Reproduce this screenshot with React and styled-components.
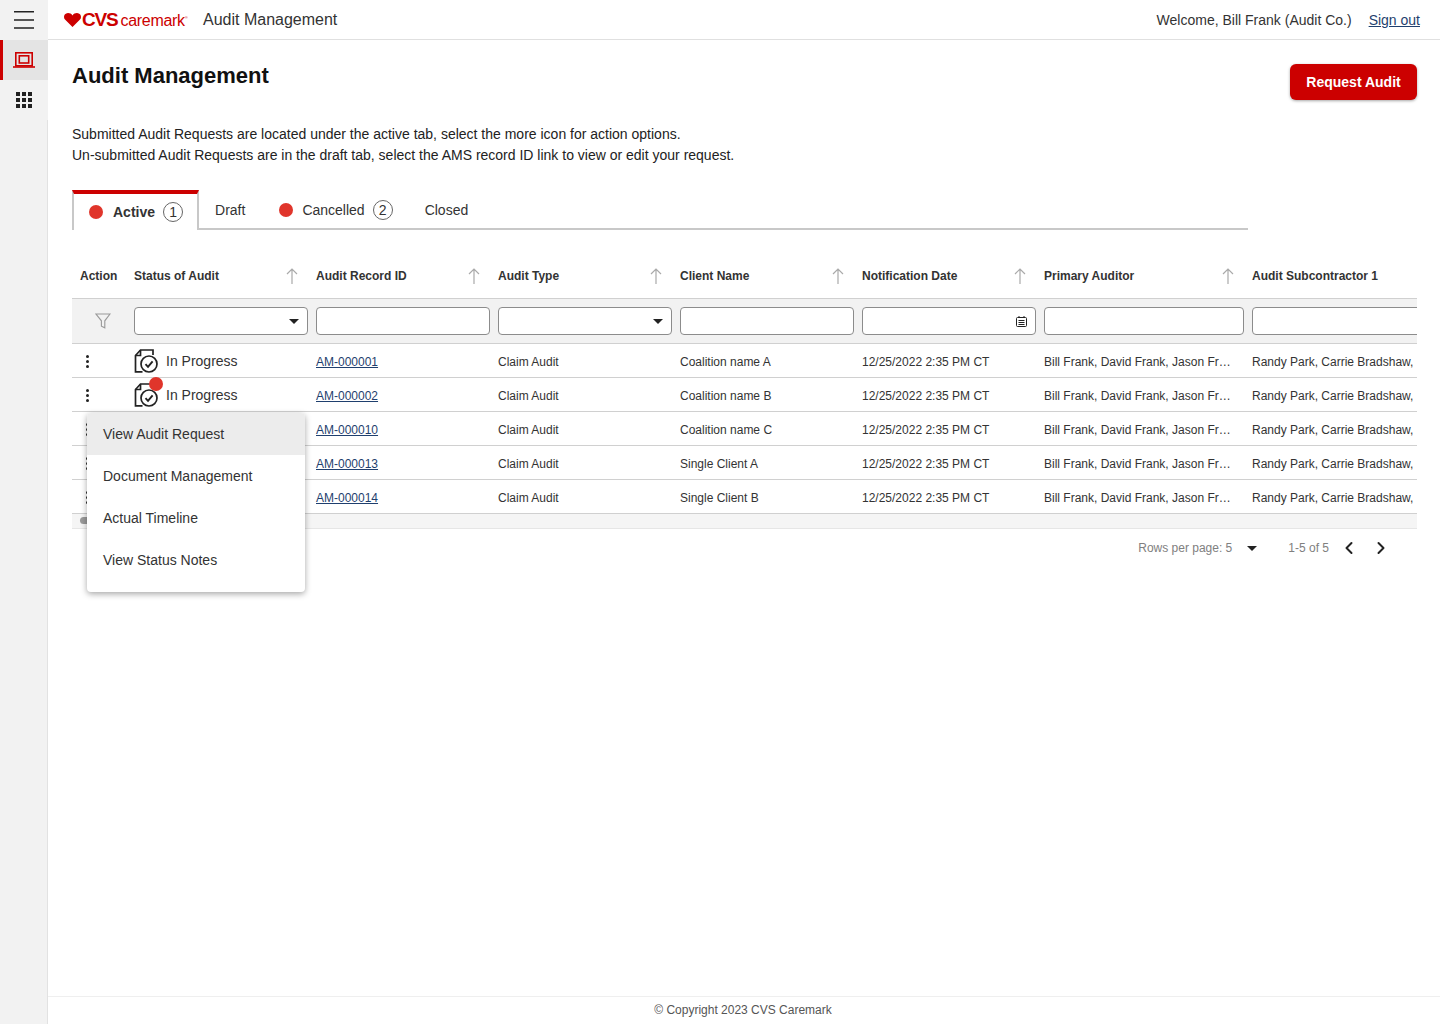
import React from "react";
import styled, { createGlobalStyle } from "styled-components";
import { ChevronLeft, ChevronRight } from "lucide-react";

const GlobalStyle = createGlobalStyle`
  html, body {
    margin: 0;
    padding: 0;
    background: #fff;
    font-family: "Liberation Sans", Arial, sans-serif;
    color: #333;
  }
  * { box-sizing: border-box; }
`;

const rows = [
  { id: "AM-000001", client: "Coalition name A" },
  { id: "AM-000002", client: "Coalition name B", flag: true },
  { id: "AM-000010", client: "Coalition name C", hideStatus: true },
  { id: "AM-000013", client: "Single Client A", hideStatus: true },
  { id: "AM-000014", client: "Single Client B", hideStatus: true },
];

const headers = [
  "Status of Audit",
  "Audit Record ID",
  "Audit Type",
  "Client Name",
  "Notification Date",
  "Primary Auditor",
];

const menuItems = ["View Audit Request", "Document Management", "Actual Timeline", "View Status Notes"];

const Page = styled.div`
  display: flex;
  min-height: 1024px;
`;

const Sidebar = styled.nav`
  width: 48px;
  flex: none;
  display: flex;
  flex-direction: column;
  background: #f2f2f2;
`;

const SideItem = styled.div`
  height: 40px;
  display: flex;
  align-items: center;
  justify-content: center;
  background: ${(p) => (p.$active ? "#e4e4e4" : "transparent")};
  border-left: ${(p) => (p.$active ? "3px solid #cc0000" : "none")};
  padding-right: ${(p) => (p.$active ? "3px" : "0")};
`;

const SideRest = styled.div`
  flex: 1;
  border-right: 1px solid #e2e2e2;
`;

const Main = styled.div`
  flex: 1;
  min-width: 0;
  display: flex;
  flex-direction: column;
`;

const Header = styled.header`
  height: 40px;
  display: flex;
  align-items: center;
  padding: 0 20px 0 16px;
  border-bottom: 1px solid #e0e0e0;
`;

const Logo = styled.div`
  display: flex;
  align-items: center;
  color: #cc0000;
  width: 139px;
`;

const LogoCvs = styled.span`
  font-size: 19px;
  font-weight: 700;
  letter-spacing: -1.2px;
  margin-left: 1px;
`;

const LogoCare = styled.span`
  font-size: 16px;
  letter-spacing: -0.3px;
  margin-left: 3px;
  margin-top: 2px;
`;

const LogoTm = styled.sup`
  font-size: 4px;
  margin-top: -5px;
`;

const AppName = styled.span`
  font-size: 16px;
  color: #333;
`;

const Welcome = styled.span`
  margin-left: auto;
  font-size: 14px;
  color: #333;
`;

const SignOut = styled.a`
  margin-left: 17px;
  font-size: 14px;
  color: #1f3f6e;
  text-decoration: underline;
`;

const Content = styled.main`
  flex: 1;
  padding: 24px 23px 0 24px;
`;

const TitleRow = styled.div`
  display: flex;
  justify-content: space-between;
  align-items: flex-start;
`;

const Title = styled.h1`
  margin: 0;
  font-size: 22px;
  line-height: 24px;
  font-weight: 700;
  color: #111;
`;

const RequestButton = styled.button`
  width: 127px;
  height: 36px;
  border: none;
  border-radius: 6px;
  background: #cc0000;
  color: #fff;
  font-family: inherit;
  font-size: 14px;
  font-weight: 700;
  box-shadow: 0 1px 3px rgba(0, 0, 0, 0.35);
`;

const Intro = styled.p`
  margin: 24px 0 0;
  font-size: 14px;
  line-height: 21px;
  color: #222;
`;

const Tabs = styled.div`
  margin-top: 24px;
  width: 1176px;
  height: 40px;
  display: flex;
  border-bottom: 2px solid #c8c8c8;
`;

const Tab = styled.div`
  display: flex;
  align-items: center;
  height: 36px;
  margin-top: 2px;
  padding: ${(p) => p.$pad || "0"};
  font-size: 14px;
  color: #333;
`;

const ActiveTab = styled(Tab)`
  height: 40px;
  margin-top: 0;
  font-weight: 700;
  background: #fff;
  border-top: 4px solid #cc0000;
  border-left: 2px solid #c8c8c8;
  border-right: 2px solid #c8c8c8;
`;

const Dot = styled.span`
  display: inline-block;
  width: 14px;
  height: 14px;
  border-radius: 50%;
  background: #e0352b;
  flex: none;
`;

const Count = styled.span`
  display: inline-flex;
  align-items: center;
  justify-content: center;
  width: 20px;
  height: 20px;
  border: 1.5px solid #666;
  border-radius: 50%;
  font-size: 14px;
  font-weight: 400;
  color: #333;
`;

const TabDot = styled(Dot)`
  margin-right: ${(p) => p.$gap}px;
`;

const TabCount = styled(Count)`
  margin-left: ${(p) => p.$gap}px;
`;

const TableWrap = styled.div`
  position: relative;
  margin-top: 23px;
`;

const TableScroll = styled.div`
  overflow: hidden;
`;

const Row = styled.div`
  display: grid;
  grid-template-columns: 62px repeat(5, 182px) 208px 200px;
  align-items: center;
`;

const HeadRow = styled(Row)`
  height: 46px;
  border-bottom: 1px solid #d0d0d0;
`;

const HeadCell = styled.div`
  display: flex;
  align-items: center;
  justify-content: space-between;
  padding-right: 18px;
  padding-left: ${(p) => p.$left || 0}px;
  font-size: 12px;
  font-weight: 700;
  color: #333;
`;

const FilterRow = styled(Row)`
  height: 45px;
  background: #f2f2f2;
  border-bottom: 1px solid #d0d0d0;
`;

const FilterIcon = styled.div`
  display: flex;
  justify-content: center;
`;

const FilterBox = styled.div`
  width: ${(p) => p.$width || "174px"};
  height: 28px;
  display: flex;
  align-items: center;
  justify-content: flex-end;
  padding-right: 8px;
  background: #fff;
  border: 1px solid #8c8c8c;
  border-radius: 4px;
`;

const Caret = styled.span`
  width: 0;
  height: 0;
  border-left: 5px solid transparent;
  border-right: 5px solid transparent;
  border-top: 5px solid #222;
`;

const DataRow = styled(Row)`
  height: 34px;
  padding-top: 2px;
  border-bottom: 1px solid #d0d0d0;
  font-size: 12px;
  color: #333;
`;

const Kebab = styled.div`
  display: flex;
  flex-direction: column;
  gap: 2px;
  margin-left: 14px;
  width: 3px;

  span {
    width: 3px;
    height: 3px;
    border-radius: 50%;
    background: #222;
  }
`;

const Status = styled.div`
  position: relative;
  display: flex;
  align-items: center;
  gap: 6px;
  margin-top: -2px;
  font-size: 14px;
`;

const Flag = styled(Dot)`
  position: absolute;
  left: 15px;
  top: -6px;
`;

const RecordLink = styled.a`
  color: #1f3f6e;
  text-decoration: underline;
`;

const Clip = styled.div`
  white-space: nowrap;
  overflow: hidden;
  text-overflow: ellipsis;
  padding-right: ${(p) => p.$right || 0}px;
`;

const ScrollTrack = styled.div`
  height: 15px;
  padding-top: 3px;
  background: #f5f5f5;
  border-bottom: 1px solid #e6e6e6;
`;

const ScrollThumb = styled.div`
  width: 120px;
  height: 7px;
  margin-left: 8px;
  border-radius: 4px;
  background: #9a9a9a;
`;

const Pagination = styled.div`
  display: flex;
  align-items: center;
  justify-content: flex-end;
  height: 38px;
  padding-right: 26px;
  font-size: 12px;
  color: #808080;
`;

const PageCaret = styled(Caret)`
  margin: 0 31px 0 15px;
`;

const PageArrows = styled.div`
  display: flex;
  gap: 12px;
  margin-left: 10px;
  color: #222;
`;

const Menu = styled.div`
  position: absolute;
  left: 15px;
  top: 160px;
  width: 218px;
  height: 179px;
  background: #fff;
  border-radius: 4px;
  box-shadow: 0 2px 6px rgba(0, 0, 0, 0.35);
  overflow: hidden;
`;

const MenuItem = styled.div`
  height: 42px;
  display: flex;
  align-items: center;
  padding-left: 16px;
  font-size: 14px;
  color: #333;
  background: ${(p) => (p.$active ? "#ececec" : "#fff")};
`;

const Footer = styled.footer`
  height: 28px;
  display: flex;
  align-items: center;
  justify-content: center;
  padding: 0 2px 2px 0;
  border-top: 1px solid #efefef;
  font-size: 12px;
  color: #555;
`;

const Hamburger = () => (
  <svg width="20" height="18" viewBox="0 0 20 18" fill="none" stroke="#222" strokeWidth="1.6">
    <path d="M0 .8h20M0 9h20M0 17h20" />
  </svg>
);

const ScreenIcon = () => (
  <svg width="22" height="16" viewBox="0 0 22 16" fill="none" stroke="#cc0000" strokeWidth="1.6">
    <rect x="2.8" y="0.8" width="16.4" height="13" />
    <rect x="6.3" y="3.8" width="9.4" height="7.2" />
    <path d="M0 15h22" />
  </svg>
);

const GridIcon = () => (
  <svg width="16" height="16" viewBox="0 0 16 16" fill="#222">
    {[0, 6, 12].map((y) =>
      [0, 6, 12].map((x) => <rect key={`${x}-${y}`} x={x} y={y} width="4" height="4" />)
    )}
  </svg>
);

const Heart = () => (
  <svg width="17" height="14" viewBox="0 0 17 14" fill="#cc0000">
    <path d="M8.5 14 1 6.6C-.6 4.7-.2 1.8 1.8.7 4-.6 6.9.2 8.5 2.4 10.1.2 13-.6 15.2.7c2 1.1 2.4 4 .8 5.9z" />
  </svg>
);

const SortArrow = () => (
  <svg width="12" height="16" viewBox="0 0 12 16" fill="none" stroke="#aaa" strokeWidth="1.2">
    <path d="M6 16V1M1 6l5-5 5 5" />
  </svg>
);

const Funnel = () => (
  <svg width="16" height="16" viewBox="0 0 16 16" fill="none" stroke="#999" strokeWidth="1.1">
    <path d="M1 1h14L9.8 7.8v7l-3.4-1.6V7.8z" />
  </svg>
);

const CalendarIcon = () => (
  <svg width="11" height="11" viewBox="0 0 11 11" fill="none" stroke="#222" strokeWidth="1">
    <rect x="0.5" y="1.5" width="10" height="9" rx="1" />
    <path d="M3 0v2M8 0v2M2.5 4.5h6M2.5 6.5h6M2.5 8.5h6" />
  </svg>
);

const AuditIcon = () => (
  <svg width="26" height="24" viewBox="0 0 26 24" fill="none" stroke="#222" strokeWidth="1.7">
    <path d="M8.5 22.8H1.5V6.5L6.5 1H19v5" />
    <path d="M6.5 1v5.5h-5" />
    <circle cx="15" cy="15" r="8" />
    <path d="M11.5 15.2l2.5 2.6 4.6-5.4" strokeWidth="1.9" />
  </svg>
);

export default function App() {
  return (
    <Page>
      <GlobalStyle />
      <Sidebar>
        <SideItem>
          <Hamburger />
        </SideItem>
        <SideItem $active>
          <ScreenIcon />
        </SideItem>
        <SideItem>
          <GridIcon />
        </SideItem>
        <SideRest />
      </Sidebar>
      <Main>
        <Header>
          <Logo>
            <Heart />
            <LogoCvs>CVS</LogoCvs>
            <LogoCare>caremark</LogoCare>
            <LogoTm>®</LogoTm>
          </Logo>
          <AppName>Audit Management</AppName>
          <Welcome>Welcome, Bill Frank (Audit Co.)</Welcome>
          <SignOut href="#">Sign out</SignOut>
        </Header>
        <Content>
          <TitleRow>
            <Title>Audit Management</Title>
            <RequestButton>Request Audit</RequestButton>
          </TitleRow>
          <Intro>
            Submitted Audit Requests are located under the active tab, select the more icon for action options.
            <br />
            Un-submitted Audit Requests are in the draft tab, select the AMS record ID link to view or edit your request.
          </Intro>
          <Tabs>
            <ActiveTab $pad="0 14px 0 15px">
              <TabDot $gap={10} />
              Active
              <TabCount $gap={8}>1</TabCount>
            </ActiveTab>
            <Tab $pad="0 34px 0 16px">Draft</Tab>
            <Tab $pad="0 32px 0 0">
              <TabDot $gap={9} />
              Cancelled
              <TabCount $gap={8}>2</TabCount>
            </Tab>
            <Tab>Closed</Tab>
          </Tabs>
          <TableWrap>
            <TableScroll>
              <HeadRow>
                <HeadCell $left={8}>Action</HeadCell>
                {headers.map((h) => (
                  <HeadCell key={h}>
                    {h}
                    <SortArrow />
                  </HeadCell>
                ))}
                <HeadCell>Audit Subcontractor 1</HeadCell>
              </HeadRow>
              <FilterRow>
                <FilterIcon>
                  <Funnel />
                </FilterIcon>
                <FilterBox>
                  <Caret />
                </FilterBox>
                <FilterBox />
                <FilterBox>
                  <Caret />
                </FilterBox>
                <FilterBox />
                <FilterBox>
                  <CalendarIcon />
                </FilterBox>
                <FilterBox $width="200px" />
                <FilterBox $width="200px" />
              </FilterRow>
              {rows.map((r) => (
                <DataRow key={r.id}>
                  <Kebab>
                    <span />
                    <span />
                    <span />
                  </Kebab>
                  <Status>
                    {!r.hideStatus && <AuditIcon />}
                    {!r.hideStatus && "In Progress"}
                    {r.flag && <Flag />}
                  </Status>
                  <div>
                    <RecordLink href="#">{r.id}</RecordLink>
                  </div>
                  <div>Claim Audit</div>
                  <div>{r.client}</div>
                  <div>12/25/2022 2:35 PM CT</div>
                  <Clip $right={21}>Bill Frank, David Frank, Jason Frank</Clip>
                  <Clip>Randy Park, Carrie Bradshaw,</Clip>
                </DataRow>
              ))}
              <ScrollTrack>
                <ScrollThumb />
              </ScrollTrack>
            </TableScroll>
            <Menu>
              {menuItems.map((m, i) => (
                <MenuItem key={m} $active={i === 0}>
                  {m}
                </MenuItem>
              ))}
            </Menu>
          </TableWrap>
          <Pagination>
            Rows per page: 5
            <PageCaret />
            1-5 of 5
            <PageArrows>
              <ChevronLeft size={20} strokeWidth={2.4} />
              <ChevronRight size={20} strokeWidth={2.4} />
            </PageArrows>
          </Pagination>
        </Content>
        <Footer>© Copyright 2023 CVS Caremark</Footer>
      </Main>
    </Page>
  );
}
